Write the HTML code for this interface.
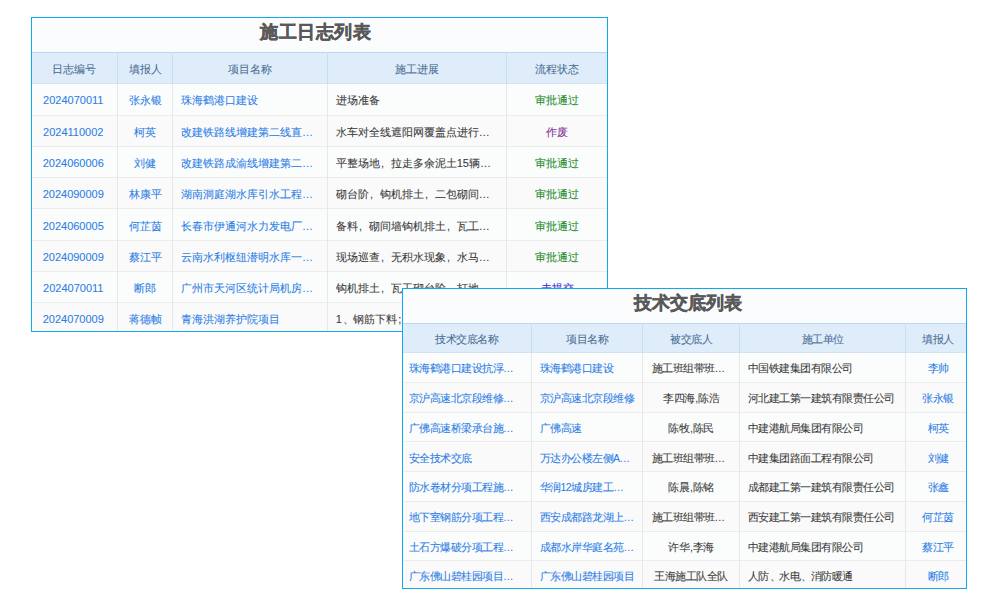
<!DOCTYPE html>
<html><head><meta charset="utf-8"><style>
html,body{margin:0;padding:0;background:#fff;width:1000px;height:600px;overflow:hidden}
body{font-family:"Liberation Sans",sans-serif;position:relative}
.pn{position:absolute;box-sizing:border-box;border:1px solid #10a9ec;background:#fcfcfc;overflow:hidden}
.pn div{position:absolute;box-sizing:border-box}
.ttl{background:#fbfcfd}
.tt{-webkit-text-stroke:0.4px #595959;width:200px;height:30px;line-height:30px;text-align:center;font-weight:bold;color:#595959;white-space:nowrap}
.hd{background:#dfedfb;border-top:1px solid #b7d6f1;border-bottom:1px solid #d3e3f1}
.rw0{background:#fbfcfc;border-bottom:1px solid #ececec}
.rw1{background:#fafafa;border-bottom:1px solid #ececec}
.cl{white-space:nowrap;overflow:hidden;-webkit-text-stroke:0.08px currentColor}
.ac,.ac{text-align:center}
.al{text-align:left;padding-left:9px}
.h{color:#4b6e93}
.lk{color:#2c7ee6}
.tx{color:#3a3a3a}
.ok{color:#248c2e}
.bad{color:#86339a}
.new{color:#3626e0}
.fw{display:inline-block;width:1em;text-align:left;text-indent:0.12em}
.cm{padding:0 0.5px 0 0.6px}
.vl{width:1px;background:#c9def0}
.vb{width:1px;background:#e8e8e8}
</style></head><body>
<div class="pn" style="left:31px;top:17px;width:577px;height:315px;z-index:1">
<div class="ttl" style="left:0;top:0;width:100%;height:34.3px"></div>
<div class="tt" style="left:183.5px;top:-1.5px;font-size:18px;letter-spacing:0.5px">施工日志列表</div>
<div class="hd" style="left:0;top:34.3px;width:100%;height:32.0px"></div>
<div class="cl h ac" style="left:-1px;top:35.3px;width:86.5px;height:32.0px;line-height:32.0px;font-size:11px;letter-spacing:0px">日志编号</div>
<div class="cl h ac" style="left:85.5px;top:35.3px;width:55.0px;height:32.0px;line-height:32.0px;font-size:11px;letter-spacing:0px">填报人</div>
<div class="cl h ac" style="left:140.5px;top:35.3px;width:155.0px;height:32.0px;line-height:32.0px;font-size:11px;letter-spacing:0px">项目名称</div>
<div class="cl h ac" style="left:295.5px;top:35.3px;width:179.0px;height:32.0px;line-height:32.0px;font-size:11px;letter-spacing:0px">施工进展</div>
<div class="cl h ac" style="left:474.5px;top:35.3px;width:101.0px;height:32.0px;line-height:32.0px;font-size:11px;letter-spacing:0px">流程状态</div>
<div class="rw0" style="left:0;top:66.3px;width:100%;height:31.3px"></div>
<div class="cl ac lk" style="left:-2px;top:67.3px;width:86.5px;height:31.3px;line-height:31.3px;font-size:11px;letter-spacing:0px">2024070011</div>
<div class="cl ac lk" style="left:85.5px;top:67.3px;width:55.0px;height:31.3px;line-height:31.3px;font-size:11px;letter-spacing:0px">张永银</div>
<div class="cl al lk" style="left:140.0px;top:67.3px;width:155.0px;height:31.3px;line-height:31.3px;font-size:11px;letter-spacing:0px">珠海鹤港口建设</div>
<div class="cl al tx" style="left:294.75px;top:67.3px;width:179.0px;height:31.3px;line-height:31.3px;font-size:11px;letter-spacing:0px">进场准备</div>
<div class="cl ac ok" style="left:474.5px;top:67.3px;width:101.0px;height:31.3px;line-height:31.3px;font-size:11px;letter-spacing:0px">审批通过</div>
<div class="rw1" style="left:0;top:97.6px;width:100%;height:31.3px"></div>
<div class="cl ac lk" style="left:-2px;top:98.6px;width:86.5px;height:31.3px;line-height:31.3px;font-size:11px;letter-spacing:0px">2024110002</div>
<div class="cl ac lk" style="left:85.5px;top:98.6px;width:55.0px;height:31.3px;line-height:31.3px;font-size:11px;letter-spacing:0px">柯英</div>
<div class="cl al lk" style="left:140.0px;top:98.6px;width:155.0px;height:31.3px;line-height:31.3px;font-size:11px;letter-spacing:0px">改建铁路线增建第二线直…</div>
<div class="cl al tx" style="left:294.75px;top:98.6px;width:179.0px;height:31.3px;line-height:31.3px;font-size:11px;letter-spacing:0px">水车对全线遮阳网覆盖点进行…</div>
<div class="cl ac bad" style="left:474.5px;top:98.6px;width:101.0px;height:31.3px;line-height:31.3px;font-size:11px;letter-spacing:0px">作废</div>
<div class="rw0" style="left:0;top:128.9px;width:100%;height:31.3px"></div>
<div class="cl ac lk" style="left:-2px;top:129.9px;width:86.5px;height:31.3px;line-height:31.3px;font-size:11px;letter-spacing:0px">2024060006</div>
<div class="cl ac lk" style="left:85.5px;top:129.9px;width:55.0px;height:31.3px;line-height:31.3px;font-size:11px;letter-spacing:0px">刘健</div>
<div class="cl al lk" style="left:140.0px;top:129.9px;width:155.0px;height:31.3px;line-height:31.3px;font-size:11px;letter-spacing:0px">改建铁路成渝线增建第二…</div>
<div class="cl al tx" style="left:294.75px;top:129.9px;width:179.0px;height:31.3px;line-height:31.3px;font-size:11px;letter-spacing:0px">平整场地<span class="fw">,</span>拉走多余泥土15辆…</div>
<div class="cl ac ok" style="left:474.5px;top:129.9px;width:101.0px;height:31.3px;line-height:31.3px;font-size:11px;letter-spacing:0px">审批通过</div>
<div class="rw1" style="left:0;top:160.2px;width:100%;height:31.3px"></div>
<div class="cl ac lk" style="left:-2px;top:161.2px;width:86.5px;height:31.3px;line-height:31.3px;font-size:11px;letter-spacing:0px">2024090009</div>
<div class="cl ac lk" style="left:85.5px;top:161.2px;width:55.0px;height:31.3px;line-height:31.3px;font-size:11px;letter-spacing:0px">林康平</div>
<div class="cl al lk" style="left:140.0px;top:161.2px;width:155.0px;height:31.3px;line-height:31.3px;font-size:11px;letter-spacing:0px">湖南洞庭湖水库引水工程…</div>
<div class="cl al tx" style="left:294.75px;top:161.2px;width:179.0px;height:31.3px;line-height:31.3px;font-size:11px;letter-spacing:0px">砌台阶<span class="fw">,</span>钩机排土<span class="fw">,</span>二包砌间…</div>
<div class="cl ac ok" style="left:474.5px;top:161.2px;width:101.0px;height:31.3px;line-height:31.3px;font-size:11px;letter-spacing:0px">审批通过</div>
<div class="rw0" style="left:0;top:191.5px;width:100%;height:31.3px"></div>
<div class="cl ac lk" style="left:-2px;top:192.5px;width:86.5px;height:31.3px;line-height:31.3px;font-size:11px;letter-spacing:0px">2024060005</div>
<div class="cl ac lk" style="left:85.5px;top:192.5px;width:55.0px;height:31.3px;line-height:31.3px;font-size:11px;letter-spacing:0px">何芷茵</div>
<div class="cl al lk" style="left:140.0px;top:192.5px;width:155.0px;height:31.3px;line-height:31.3px;font-size:11px;letter-spacing:0px">长春市伊通河水力发电厂…</div>
<div class="cl al tx" style="left:294.75px;top:192.5px;width:179.0px;height:31.3px;line-height:31.3px;font-size:11px;letter-spacing:0px">备料<span class="fw">,</span>砌间墙钩机排土<span class="fw">,</span>瓦工…</div>
<div class="cl ac ok" style="left:474.5px;top:192.5px;width:101.0px;height:31.3px;line-height:31.3px;font-size:11px;letter-spacing:0px">审批通过</div>
<div class="rw1" style="left:0;top:222.8px;width:100%;height:31.3px"></div>
<div class="cl ac lk" style="left:-2px;top:223.8px;width:86.5px;height:31.3px;line-height:31.3px;font-size:11px;letter-spacing:0px">2024090009</div>
<div class="cl ac lk" style="left:85.5px;top:223.8px;width:55.0px;height:31.3px;line-height:31.3px;font-size:11px;letter-spacing:0px">蔡江平</div>
<div class="cl al lk" style="left:140.0px;top:223.8px;width:155.0px;height:31.3px;line-height:31.3px;font-size:11px;letter-spacing:0px">云南水利枢纽潜明水库一…</div>
<div class="cl al tx" style="left:294.75px;top:223.8px;width:179.0px;height:31.3px;line-height:31.3px;font-size:11px;letter-spacing:0px">现场巡查<span class="fw">,</span>无积水现象<span class="fw">,</span>水马…</div>
<div class="cl ac ok" style="left:474.5px;top:223.8px;width:101.0px;height:31.3px;line-height:31.3px;font-size:11px;letter-spacing:0px">审批通过</div>
<div class="rw0" style="left:0;top:254.10000000000002px;width:100%;height:31.3px"></div>
<div class="cl ac lk" style="left:-2px;top:255.10000000000002px;width:86.5px;height:31.3px;line-height:31.3px;font-size:11px;letter-spacing:0px">2024070011</div>
<div class="cl ac lk" style="left:85.5px;top:255.10000000000002px;width:55.0px;height:31.3px;line-height:31.3px;font-size:11px;letter-spacing:0px">断郎</div>
<div class="cl al lk" style="left:140.0px;top:255.10000000000002px;width:155.0px;height:31.3px;line-height:31.3px;font-size:11px;letter-spacing:0px">广州市天河区统计局机房…</div>
<div class="cl al tx" style="left:294.75px;top:255.10000000000002px;width:179.0px;height:31.3px;line-height:31.3px;font-size:11px;letter-spacing:0px">钩机排土<span class="fw">,</span>瓦工砌台阶<span class="fw">,</span>打地…</div>
<div class="cl ac new" style="left:474.5px;top:255.10000000000002px;width:101.0px;height:31.3px;line-height:31.3px;font-size:11px;letter-spacing:0px">未提交</div>
<div class="rw1" style="left:0;top:285.4px;width:100%;height:31.3px"></div>
<div class="cl ac lk" style="left:-2px;top:286.4px;width:86.5px;height:31.3px;line-height:31.3px;font-size:11px;letter-spacing:0px">2024070009</div>
<div class="cl ac lk" style="left:85.5px;top:286.4px;width:55.0px;height:31.3px;line-height:31.3px;font-size:11px;letter-spacing:0px">蒋德帧</div>
<div class="cl al lk" style="left:140.0px;top:286.4px;width:155.0px;height:31.3px;line-height:31.3px;font-size:11px;letter-spacing:0px">青海洪湖养护院项目</div>
<div class="cl al tx" style="left:294.75px;top:286.4px;width:179.0px;height:31.3px;line-height:31.3px;font-size:11px;letter-spacing:0px">1<span class="fw">、</span>钢筋下料<span class="fw">;</span>钢筋绑扎…</div>
<div class="cl ac ok" style="left:474.5px;top:286.4px;width:101.0px;height:31.3px;line-height:31.3px;font-size:11px;letter-spacing:0px">审批通过</div>
<div class="vl" style="left:85.0px;top:34.3px;height:32.0px"></div>
<div class="vb" style="left:85.0px;top:66.3px;height:247.7px"></div>
<div class="vl" style="left:140.0px;top:34.3px;height:32.0px"></div>
<div class="vb" style="left:140.0px;top:66.3px;height:247.7px"></div>
<div class="vl" style="left:295.0px;top:34.3px;height:32.0px"></div>
<div class="vb" style="left:295.0px;top:66.3px;height:247.7px"></div>
<div class="vl" style="left:474.0px;top:34.3px;height:32.0px"></div>
<div class="vb" style="left:474.0px;top:66.3px;height:247.7px"></div>
</div>
<div class="pn" style="left:402px;top:288px;width:565px;height:301px;z-index:2">
<div class="ttl" style="left:0;top:0;width:100%;height:34.30000000000001px"></div>
<div class="tt" style="left:184.5px;top:-0.6999999999999886px;font-size:18px;letter-spacing:0px">技术交底列表</div>
<div class="hd" style="left:0;top:34.30000000000001px;width:100%;height:30.100000000000023px"></div>
<div class="cl h ac" style="left:-1px;top:34.500000000000014px;width:129.5px;height:30.100000000000023px;line-height:30.100000000000023px;font-size:10.5px;letter-spacing:-0.5px">技术交底名称</div>
<div class="cl h ac" style="left:128.5px;top:34.500000000000014px;width:111.10000000000002px;height:30.100000000000023px;line-height:30.100000000000023px;font-size:10.5px;letter-spacing:-0.5px">项目名称</div>
<div class="cl h ac" style="left:239.60000000000002px;top:34.500000000000014px;width:96.89999999999998px;height:30.100000000000023px;line-height:30.100000000000023px;font-size:10.5px;letter-spacing:-0.5px">被交底人</div>
<div class="cl h ac" style="left:336.5px;top:34.500000000000014px;width:166.10000000000002px;height:30.100000000000023px;line-height:30.100000000000023px;font-size:10.5px;letter-spacing:-0.5px">施工单位</div>
<div class="cl h ac" style="left:504.6px;top:34.500000000000014px;width:60.89999999999998px;height:30.100000000000023px;line-height:30.100000000000023px;font-size:10.5px;letter-spacing:-0.5px">填报人</div>
<div class="rw0" style="left:0;top:64.40000000000003px;width:100%;height:29.7px"></div>
<div class="cl al lk" style="left:-3.5px;top:65.40000000000003px;width:129.5px;height:29.7px;line-height:29.7px;font-size:10.5px;letter-spacing:-0.5px">珠海鹤港口建设抗浮…</div>
<div class="cl al lk" style="left:127.5px;top:65.40000000000003px;width:111.10000000000002px;height:29.7px;line-height:29.7px;font-size:10.5px;letter-spacing:-0.5px">珠海鹤港口建设</div>
<div class="cl al tx" style="left:239.60000000000002px;top:65.40000000000003px;width:96.89999999999998px;height:29.7px;line-height:29.7px;font-size:10.5px;letter-spacing:-0.5px">施工班组带班…</div>
<div class="cl al tx" style="left:335.5px;top:65.40000000000003px;width:166.10000000000002px;height:29.7px;line-height:29.7px;font-size:10.5px;letter-spacing:-0.5px">中国铁建集团有限公司</div>
<div class="cl ac lk" style="left:504.6px;top:65.40000000000003px;width:60.89999999999998px;height:29.7px;line-height:29.7px;font-size:10.5px;letter-spacing:-0.5px">李帅</div>
<div class="rw1" style="left:0;top:94.10000000000002px;width:100%;height:29.7px"></div>
<div class="cl al lk" style="left:-3.5px;top:95.10000000000002px;width:129.5px;height:29.7px;line-height:29.7px;font-size:10.5px;letter-spacing:-0.5px">京沪高速北京段维修…</div>
<div class="cl al lk" style="left:127.5px;top:95.10000000000002px;width:111.10000000000002px;height:29.7px;line-height:29.7px;font-size:10.5px;letter-spacing:-0.5px">京沪高速北京段维修</div>
<div class="cl ac tx" style="left:239.60000000000002px;top:95.10000000000002px;width:96.89999999999998px;height:29.7px;line-height:29.7px;font-size:10.5px;letter-spacing:-0.5px">李四海<span class="cm">,</span>陈浩</div>
<div class="cl al tx" style="left:335.5px;top:95.10000000000002px;width:166.10000000000002px;height:29.7px;line-height:29.7px;font-size:10.5px;letter-spacing:-0.5px">河北建工第一建筑有限责任公司</div>
<div class="cl ac lk" style="left:504.6px;top:95.10000000000002px;width:60.89999999999998px;height:29.7px;line-height:29.7px;font-size:10.5px;letter-spacing:-0.5px">张永银</div>
<div class="rw0" style="left:0;top:123.80000000000001px;width:100%;height:29.7px"></div>
<div class="cl al lk" style="left:-3.5px;top:124.80000000000001px;width:129.5px;height:29.7px;line-height:29.7px;font-size:10.5px;letter-spacing:-0.5px">广佛高速桥梁承台施…</div>
<div class="cl al lk" style="left:127.5px;top:124.80000000000001px;width:111.10000000000002px;height:29.7px;line-height:29.7px;font-size:10.5px;letter-spacing:-0.5px">广佛高速</div>
<div class="cl ac tx" style="left:239.60000000000002px;top:124.80000000000001px;width:96.89999999999998px;height:29.7px;line-height:29.7px;font-size:10.5px;letter-spacing:-0.5px">陈牧<span class="cm">,</span>陈民</div>
<div class="cl al tx" style="left:335.5px;top:124.80000000000001px;width:166.10000000000002px;height:29.7px;line-height:29.7px;font-size:10.5px;letter-spacing:-0.5px">中建港航局集团有限公司</div>
<div class="cl ac lk" style="left:504.6px;top:124.80000000000001px;width:60.89999999999998px;height:29.7px;line-height:29.7px;font-size:10.5px;letter-spacing:-0.5px">柯英</div>
<div class="rw1" style="left:0;top:153.5px;width:100%;height:29.7px"></div>
<div class="cl al lk" style="left:-3.5px;top:154.5px;width:129.5px;height:29.7px;line-height:29.7px;font-size:10.5px;letter-spacing:-0.5px">安全技术交底</div>
<div class="cl al lk" style="left:127.5px;top:154.5px;width:111.10000000000002px;height:29.7px;line-height:29.7px;font-size:10.5px;letter-spacing:-0.5px">万达办公楼左侧A…</div>
<div class="cl al tx" style="left:239.60000000000002px;top:154.5px;width:96.89999999999998px;height:29.7px;line-height:29.7px;font-size:10.5px;letter-spacing:-0.5px">施工班组带班…</div>
<div class="cl al tx" style="left:335.5px;top:154.5px;width:166.10000000000002px;height:29.7px;line-height:29.7px;font-size:10.5px;letter-spacing:-0.5px">中建集团路面工程有限公司</div>
<div class="cl ac lk" style="left:504.6px;top:154.5px;width:60.89999999999998px;height:29.7px;line-height:29.7px;font-size:10.5px;letter-spacing:-0.5px">刘健</div>
<div class="rw0" style="left:0;top:183.20000000000005px;width:100%;height:29.7px"></div>
<div class="cl al lk" style="left:-3.5px;top:184.20000000000005px;width:129.5px;height:29.7px;line-height:29.7px;font-size:10.5px;letter-spacing:-0.5px">防水卷材分项工程施…</div>
<div class="cl al lk" style="left:127.5px;top:184.20000000000005px;width:111.10000000000002px;height:29.7px;line-height:29.7px;font-size:10.5px;letter-spacing:-0.5px">华润12城房建工…</div>
<div class="cl ac tx" style="left:239.60000000000002px;top:184.20000000000005px;width:96.89999999999998px;height:29.7px;line-height:29.7px;font-size:10.5px;letter-spacing:-0.5px">陈晨<span class="cm">,</span>陈铭</div>
<div class="cl al tx" style="left:335.5px;top:184.20000000000005px;width:166.10000000000002px;height:29.7px;line-height:29.7px;font-size:10.5px;letter-spacing:-0.5px">成都建工第一建筑有限责任公司</div>
<div class="cl ac lk" style="left:504.6px;top:184.20000000000005px;width:60.89999999999998px;height:29.7px;line-height:29.7px;font-size:10.5px;letter-spacing:-0.5px">张鑫</div>
<div class="rw1" style="left:0;top:212.90000000000003px;width:100%;height:29.7px"></div>
<div class="cl al lk" style="left:-3.5px;top:213.90000000000003px;width:129.5px;height:29.7px;line-height:29.7px;font-size:10.5px;letter-spacing:-0.5px">地下室钢筋分项工程…</div>
<div class="cl al lk" style="left:127.5px;top:213.90000000000003px;width:111.10000000000002px;height:29.7px;line-height:29.7px;font-size:10.5px;letter-spacing:-0.5px">西安成都路龙湖上…</div>
<div class="cl al tx" style="left:239.60000000000002px;top:213.90000000000003px;width:96.89999999999998px;height:29.7px;line-height:29.7px;font-size:10.5px;letter-spacing:-0.5px">施工班组带班…</div>
<div class="cl al tx" style="left:335.5px;top:213.90000000000003px;width:166.10000000000002px;height:29.7px;line-height:29.7px;font-size:10.5px;letter-spacing:-0.5px">西安建工第一建筑有限责任公司</div>
<div class="cl ac lk" style="left:504.6px;top:213.90000000000003px;width:60.89999999999998px;height:29.7px;line-height:29.7px;font-size:10.5px;letter-spacing:-0.5px">何芷茵</div>
<div class="rw0" style="left:0;top:242.60000000000002px;width:100%;height:29.7px"></div>
<div class="cl al lk" style="left:-3.5px;top:243.60000000000002px;width:129.5px;height:29.7px;line-height:29.7px;font-size:10.5px;letter-spacing:-0.5px">土石方爆破分项工程…</div>
<div class="cl al lk" style="left:127.5px;top:243.60000000000002px;width:111.10000000000002px;height:29.7px;line-height:29.7px;font-size:10.5px;letter-spacing:-0.5px">成都水岸华庭名苑…</div>
<div class="cl ac tx" style="left:239.60000000000002px;top:243.60000000000002px;width:96.89999999999998px;height:29.7px;line-height:29.7px;font-size:10.5px;letter-spacing:-0.5px">许华<span class="cm">,</span>李海</div>
<div class="cl al tx" style="left:335.5px;top:243.60000000000002px;width:166.10000000000002px;height:29.7px;line-height:29.7px;font-size:10.5px;letter-spacing:-0.5px">中建港航局集团有限公司</div>
<div class="cl ac lk" style="left:504.6px;top:243.60000000000002px;width:60.89999999999998px;height:29.7px;line-height:29.7px;font-size:10.5px;letter-spacing:-0.5px">蔡江平</div>
<div class="rw1" style="left:0;top:272.30000000000007px;width:100%;height:29.7px"></div>
<div class="cl al lk" style="left:-3.5px;top:273.30000000000007px;width:129.5px;height:29.7px;line-height:29.7px;font-size:10.5px;letter-spacing:-0.5px">广东佛山碧桂园项目…</div>
<div class="cl al lk" style="left:127.5px;top:273.30000000000007px;width:111.10000000000002px;height:29.7px;line-height:29.7px;font-size:10.5px;letter-spacing:-0.5px">广东佛山碧桂园项目</div>
<div class="cl ac tx" style="left:239.60000000000002px;top:273.30000000000007px;width:96.89999999999998px;height:29.7px;line-height:29.7px;font-size:10.5px;letter-spacing:-0.5px">王海施工队全队</div>
<div class="cl al tx" style="left:335.5px;top:273.30000000000007px;width:166.10000000000002px;height:29.7px;line-height:29.7px;font-size:10.5px;letter-spacing:-0.5px">人防<span class="fw">、</span>水电<span class="fw">、</span>消防暖通</div>
<div class="cl ac lk" style="left:504.6px;top:273.30000000000007px;width:60.89999999999998px;height:29.7px;line-height:29.7px;font-size:10.5px;letter-spacing:-0.5px">断郎</div>
<div class="vl" style="left:128.0px;top:34.30000000000001px;height:30.100000000000023px"></div>
<div class="vb" style="left:128.0px;top:64.40000000000003px;height:235.59999999999997px"></div>
<div class="vl" style="left:239.10000000000002px;top:34.30000000000001px;height:30.100000000000023px"></div>
<div class="vb" style="left:239.10000000000002px;top:64.40000000000003px;height:235.59999999999997px"></div>
<div class="vl" style="left:336.0px;top:34.30000000000001px;height:30.100000000000023px"></div>
<div class="vb" style="left:336.0px;top:64.40000000000003px;height:235.59999999999997px"></div>
<div class="vl" style="left:502.1px;top:34.30000000000001px;height:30.100000000000023px"></div>
<div class="vb" style="left:502.1px;top:64.40000000000003px;height:235.59999999999997px"></div>
</div>
</body></html>
